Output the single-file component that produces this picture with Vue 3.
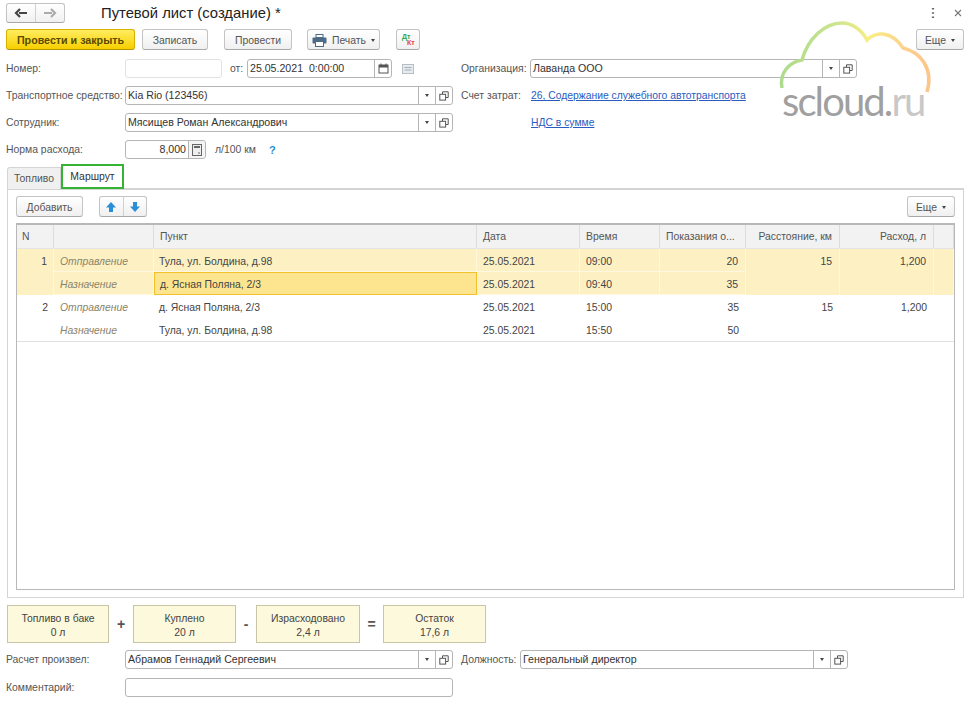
<template>
  <div class="page">
    <!-- window header -->
    <div class="head">
      <div class="nav">
        <button class="nav-btn">
          <svg width="14" height="10" viewBox="0 0 14 10"><path d="M13 5H5M6 1 2 5l4 4" fill="none" stroke="#444" stroke-width="2.2"/></svg>
        </button>
        <button class="nav-btn">
          <svg width="14" height="10" viewBox="0 0 14 10"><path d="M1 5h8M8 1l4 4-4 4" fill="none" stroke="#aaa" stroke-width="2.2"/></svg>
        </button>
      </div>
      <h1 class="title">Путевой лист (создание) *</h1>
      <div class="win-icons">
        <svg width="4" height="12" viewBox="0 0 4 12"><path d="M2 1v1.6M2 5.2v1.6M2 9.4V11" stroke="#666" stroke-width="2.2"/></svg>
        <svg width="10" height="10" viewBox="0 0 10 10"><path d="m2 2 6 6M8 2 2 8" stroke="#777" stroke-width="1.1"/></svg>
      </div>
    </div>

    <!-- command bar -->
    <div class="commands">
      <button class="btn primary">Провести и закрыть</button>
      <button class="btn w-save">Записать</button>
      <button class="btn w-post">Провести</button>
      <button class="btn w-print">
        <svg width="15" height="13" viewBox="0 0 15 13">
          <rect x="4" y="0.5" width="7" height="3" fill="#fff" stroke="#4d6b86"/>
          <rect x="0.5" y="3.5" width="14" height="6" rx="1" fill="#4d6b86"/>
          <rect x="3.5" y="7.5" width="8" height="5" fill="#fff" stroke="#4d6b86"/>
        </svg>
        Печать
        <i class="caret"></i>
      </button>
      <button class="btn dtkt"><span class="dt">Дт</span><span class="kt">Кт</span></button>
      <button class="btn more top-more">Еще <i class="caret"></i></button>
    </div>

    <!-- requisites -->
    <div class="form">
      <label>Номер:</label>
      <div class="line">
        <div class="field blank w-num"></div>
        <span class="from">от:</span>
        <div class="field w-date">
          <span class="val">25.05.2021&nbsp; 0:00:00</span>
          <span class="fb">
            <svg width="11" height="11" viewBox="0 0 11 11"><rect x="1" y="2" width="9" height="8" fill="none" stroke="#555"/><rect x="1" y="2" width="9" height="2.5" fill="#555"/><path d="M3 .5V2M8 .5V2" stroke="#555"/></svg>
          </span>
        </div>
        <svg class="note" width="12" height="10" viewBox="0 0 12 10"><rect x="0.5" y="0.5" width="11" height="9" fill="#e6ebef" stroke="#b4bfc8"/><path d="M2.5 3.5h7M2.5 6h7" stroke="#a3b0ba"/></svg>
      </div>
      <label class="lbl2">Организация:</label>
      <div class="field">
        <span class="val">Лаванда ООО</span>
        <span class="fb"><i class="caret"></i></span>
        <span class="fb"><svg width="10" height="10" viewBox="0 0 10 10"><path d="M3.5 3V.8h5.7v5.7H7" fill="none" stroke="#555"/><rect x="0.8" y="3.3" width="5.8" height="5.8" fill="none" stroke="#555"/></svg></span>
      </div>

      <label>Транспортное средство:</label>
      <div class="field">
        <span class="val">Kia Rio (123456)</span>
        <span class="fb"><i class="caret"></i></span>
        <span class="fb"><svg width="10" height="10" viewBox="0 0 10 10"><path d="M3.5 3V.8h5.7v5.7H7" fill="none" stroke="#555"/><rect x="0.8" y="3.3" width="5.8" height="5.8" fill="none" stroke="#555"/></svg></span>
      </div>
      <label class="lbl2">Счет затрат:</label>
      <a class="link">26, Содержание служебного автотранспорта</a>

      <label>Сотрудник:</label>
      <div class="field">
        <span class="val">Мясищев Роман Александрович</span>
        <span class="fb"><i class="caret"></i></span>
        <span class="fb"><svg width="10" height="10" viewBox="0 0 10 10"><path d="M3.5 3V.8h5.7v5.7H7" fill="none" stroke="#555"/><rect x="0.8" y="3.3" width="5.8" height="5.8" fill="none" stroke="#555"/></svg></span>
      </div>
      <span></span>
      <a class="link">НДС в сумме</a>

      <label>Норма расхода:</label>
      <div class="line">
        <div class="field w-rate">
          <span class="val right">8,000</span>
          <span class="fb calc">
            <svg width="10" height="12" viewBox="0 0 10 12"><rect x="0.5" y="0.5" width="9" height="11" fill="#eee" stroke="#666"/><rect x="2" y="2" width="6" height="2" fill="#666"/><path d="M6 9h2" stroke="#666"/></svg>
          </span>
        </div>
        <span class="unit">л/100 км</span>
        <span class="hint">?</span>
      </div>
    </div>

    <!-- tabs -->
    <div class="tabs">
      <div class="tab">Топливо</div>
      <div class="tab active">Маршрут</div>
    </div>
    <div class="panel">
      <div class="toolbar">
        <button class="btn w-add">Добавить</button>
        <div class="arrows">
          <button class="arrow">
            <svg width="12" height="12" viewBox="0 0 12 12"><path d="M6 1 1 6.500h3V11h4V6.500h3z" fill="#2b8fd6"/></svg>
          </button>
          <button class="arrow">
            <svg width="12" height="12" viewBox="0 0 12 12"><path d="M6 11 1 5.500h3V1h4v4.500h3z" fill="#2b8fd6"/></svg>
          </button>
        </div>
        <button class="btn more">Еще <i class="caret"></i></button>
      </div>

      <div class="table">
        <div class="row header">
          <div v-for="c in columns" :key="c.key" class="cell" :class="{ right: c.right, num: c.key === 'n' }">{{ c.title }}</div>
        </div>
        <div v-for="g in groups" :key="g.n" class="group" :class="{ selected: g.selected }">
          <div class="cell right span num">{{ g.n }}</div>
          <template v-for="(p, i) in g.points" :key="i">
            <div class="cell kind">{{ p.kind }}</div>
            <div class="cell place" :class="{ current: p.current }">{{ p.place }}</div>
            <div class="cell">{{ p.date }}</div>
            <div class="cell">{{ p.time }}</div>
            <div class="cell right">{{ p.odo }}</div>
            <template v-if="i === 0">
              <div class="cell right span">{{ g.dist }}</div>
              <div class="cell right span">{{ g.cons }}</div>
              <div class="cell span"></div>
            </template>
          </template>
        </div>
      </div>
    </div>

    <!-- fuel summary -->
    <div class="summary">
      <template v-for="s in summary" :key="s.title">
        <div class="box" :style="{ width: s.width + 'px' }">{{ s.title }}<br />{{ s.value }}</div>
        <span v-if="s.op" class="op" :style="{ width: s.gap + 'px' }">{{ s.op }}</span>
      </template>
    </div>

    <div class="form bottom">
      <label>Расчет произвел:</label>
      <div class="field">
        <span class="val">Абрамов Геннадий Сергеевич</span>
        <span class="fb"><i class="caret"></i></span>
        <span class="fb"><svg width="10" height="10" viewBox="0 0 10 10"><path d="M3.5 3V.8h5.7v5.7H7" fill="none" stroke="#555"/><rect x="0.8" y="3.3" width="5.8" height="5.8" fill="none" stroke="#555"/></svg></span>
      </div>
      <div class="pos">
        <label class="lbl2">Должность:</label>
        <div class="field">
          <span class="val">Генеральный директор</span>
          <span class="fb"><i class="caret"></i></span>
          <span class="fb"><svg width="10" height="10" viewBox="0 0 10 10"><path d="M3.5 3V.8h5.7v5.7H7" fill="none" stroke="#555"/><rect x="0.8" y="3.3" width="5.8" height="5.8" fill="none" stroke="#555"/></svg></span>
        </div>
      </div>

      <label>Комментарий:</label>
      <div class="field"></div>
    </div>

    <!-- watermark over the form -->
    <div class="logo">
      <svg width="160" height="80" viewBox="775 18 160 80">
        <defs>
          <linearGradient id="cloud" x1="0" y1="0" x2="1" y2="0">
            <stop offset="0" stop-color="#aedb8c" />
            <stop offset="0.35" stop-color="#c8e48e" />
            <stop offset="0.6" stop-color="#f9ee85" />
            <stop offset="0.85" stop-color="#fdcf8e" />
            <stop offset="1" stop-color="#fcc58a" />
          </linearGradient>
        </defs>
        <path d="M782 88C779 72 790 62 802 60 808 38 825 23 842 23 852 23 862 30 867 40 876 31 892 31 903 48 920 52 934 68 927 92" fill="none" stroke="url(#cloud)" stroke-width="3.500" />
      </svg>
      <div class="logo-text"><span class="a">scloud.</span><span class="b">ru</span></div>
    </div>
  </div>
</template>

<script setup>
const columns = [
  { key: 'n', title: 'N' },
  { key: 'kind', title: '' },
  { key: 'place', title: 'Пункт' },
  { key: 'date', title: 'Дата' },
  { key: 'time', title: 'Время' },
  { key: 'odo', title: 'Показания о...' },
  { key: 'dist', title: 'Расстояние, км', right: true },
  { key: 'cons', title: 'Расход, л', right: true },
  { key: 'end', title: '' },
]

const groups = [
  {
    n: 1,
    selected: true,
    dist: 15,
    cons: '1,200',
    points: [
      { kind: 'Отправление', place: 'Тула, ул. Болдина, д.98', date: '25.05.2021', time: '09:00', odo: 20 },
      { kind: 'Назначение', place: 'д. Ясная Поляна, 2/3', date: '25.05.2021', time: '09:40', odo: 35, current: true },
    ],
  },
  {
    n: 2,
    dist: 15,
    cons: '1,200',
    points: [
      { kind: 'Отправление', place: 'д. Ясная Поляна, 2/3', date: '25.05.2021', time: '15:00', odo: 35 },
      { kind: 'Назначение', place: 'Тула, ул. Болдина, д.98', date: '25.05.2021', time: '15:50', odo: 50 },
    ],
  },
]

const summary = [
  { title: 'Топливо в баке', value: '0 л', width: 102, op: '+', gap: 24 },
  { title: 'Куплено', value: '20 л', width: 103, op: '-', gap: 20 },
  { title: 'Израсходовано', value: '2,4 л', width: 104, op: '=', gap: 23 },
  { title: 'Остаток', value: '17,6 л', width: 103 },
]
</script>

<style>
html,
body {
  margin: 0;
  background: #fff;
}
</style>

<style scoped>
.page {
  position: relative;
  width: 974px;
  height: 704px;
  overflow: hidden;
  box-sizing: border-box;
  padding: 2px 10px 0 6px;
  font-family: "Liberation Sans", Arial, sans-serif;
  font-size: 10.400px;
  color: #555;
}
button {
  font: inherit;
  color: inherit;
  padding: 0;
}
label {
  white-space: nowrap;
}
.head {
  display: flex;
  align-items: center;
  height: 21px;
}
.nav {
  display: flex;
  width: 59px;
  height: 20px;
  box-sizing: border-box;
  border: 1px solid #c4c4c4;
  border-bottom-color: #a8a8a8;
  border-radius: 3px;
  background: linear-gradient(#fff, #f0f0f0);
}
.nav-btn {
  flex: 1;
  border: 0;
  background: none;
  display: flex;
  align-items: center;
  justify-content: center;
}
.nav-btn + .nav-btn {
  border-left: 1px solid #d0d0d0;
}
.title {
  margin: 0 0 0 36px;
  font-size: 14.800px;
  font-weight: 400;
  color: #222;
}
.win-icons {
  margin-left: auto;
  display: flex;
  align-items: center;
  gap: 18px;
  margin-right: 1px;
}
.commands {
  display: flex;
  align-items: center;
  height: 21px;
  margin-top: 6px;
}
.btn {
  display: flex;
  align-items: center;
  justify-content: center;
  gap: 5px;
  box-sizing: border-box;
  height: 21px;
  padding-top: 1px;
  border: 1px solid #c4c4c4;
  border-bottom-color: #a8a8a8;
  border-radius: 3px;
  background: linear-gradient(#fff, #f0f0f0);
}
.primary {
  width: 129px;
  font-size: 10.700px;
  font-weight: 700;
  color: #5a4a00;
  background: linear-gradient(#ffed60, #f7cf00);
  border-color: #d6b100;
  border-bottom-color: #b69600;
}
.w-save {
  width: 66px;
  margin-left: 7px;
}
.w-post {
  width: 68px;
  margin-left: 16px;
}
.w-print {
  width: 73px;
  margin-left: 15px;
}
.dtkt {
  width: 24px;
  margin-left: 16px;
  position: relative;
  font-size: 7px;
  font-weight: 700;
}
.dt {
  position: absolute;
  left: 5px;
  top: 3px;
  color: #2ea84a;
}
.kt {
  position: absolute;
  left: 10px;
  top: 9px;
  color: #e0443c;
}
.more {
  width: 48px;
  margin-left: auto;
}
.top-more {
  position: relative;
  z-index: 2;
}
.caret {
  display: inline-block;
  width: 0;
  height: 0;
  border-left: 2.500px solid transparent;
  border-right: 2.500px solid transparent;
  border-top: 3px solid #444;
}
.form {
  display: grid;
  grid-template-columns: 119px 328px 8px 69px 327px;
  grid-auto-rows: 19px;
  row-gap: 8px;
  align-items: center;
  margin-top: 9px;
}
.form > label {
  grid-column: 1;
}
.form > .lbl2 {
  grid-column: 4;
}
.form > span:empty {
  grid-column: 3 / 5;
}
.form > .lbl2 + .field,
.form > .lbl2 + .link {
  grid-column: 5;
}
.form > .link {
  grid-column: 5;
  justify-self: start;
  margin-left: 1px;
}
.line {
  display: flex;
  align-items: center;
  width: 290px;
}
.field {
  display: flex;
  align-items: center;
  box-sizing: border-box;
  height: 19px;
  border: 1px solid #b5b5b5;
  border-radius: 3px;
  background: #fff;
}
.blank {
  border-color: #e2e2e2;
}
.val {
  flex: 1;
  margin-top: -1px;
  padding-left: 2px;
  color: #333;
  font-size: 10.600px;
  white-space: nowrap;
}
.val.right {
  text-align: right;
  padding-right: 2px;
}
.fb {
  display: flex;
  align-items: center;
  justify-content: center;
  width: 16px;
  height: 100%;
  border-left: 1px solid #b5b5b5;
}
.fb.calc {
  background: #f4f4f4;
  border-radius: 0 3px 3px 0;
}
.w-num {
  flex: none;
  width: 97px;
}
.from {
  margin-left: 8px;
  width: 17px;
}
.w-date {
  flex: none;
  width: 145px;
}
.note {
  margin-left: 10px;
  flex: none;
}
.w-rate {
  flex: none;
  width: 81px;
}
.unit {
  margin-left: 9px;
}
.hint {
  margin-left: 13px;
  color: #2b8fd6;
  font-weight: 700;
  font-size: 11px;
}
.link {
  color: #2a5bbf;
  font-size: 10.350px;
  text-decoration: underline;
  white-space: nowrap;
}
.tabs {
  display: flex;
  align-items: flex-end;
  height: 25px;
  margin-top: 5px;
  margin-left: 1px;
}
.tab {
  box-sizing: border-box;
  display: flex;
  align-items: center;
  justify-content: center;
  width: 54px;
  height: 22px;
  border: 1px solid #d4d4d4;
  border-bottom: 0;
  background: #f0f0f0;
  border-radius: 3px 0 0 0;
}
.tab.active {
  width: 63px;
  height: 25px;
  border: 2px solid #35b335;
  border-radius: 0;
  background: #fff;
  color: #333;
  position: relative;
  z-index: 1;
}
.panel {
  box-sizing: border-box;
  height: 410px;
  margin-top: -1px;
  margin-left: 1px;
  padding: 6px 8px 7px 8px;
  border: 1px solid #d4d4d4;
  border-top-width: 2px;
  display: flex;
  flex-direction: column;
}
.toolbar {
  display: flex;
  align-items: center;
  height: 21px;
  flex: none;
}
.w-add {
  width: 67px;
}
.arrows {
  display: flex;
  width: 48px;
  height: 21px;
  margin-left: 16px;
  box-sizing: border-box;
  border: 1px solid #c4c4c4;
  border-bottom-color: #a8a8a8;
  border-radius: 3px;
  background: linear-gradient(#fff, #f0f0f0);
}
.arrow {
  flex: 1;
  border: 0;
  background: none;
  display: flex;
  align-items: center;
  justify-content: center;
}
.arrow + .arrow {
  border-left: 1px solid #d0d0d0;
}
.table {
  flex: 1;
  margin-top: 6px;
  border: 1px solid #b8b8b8;
  border-top-width: 2px;
}
.row,
.group {
  display: grid;
  grid-template-columns: 37px 100px 323px 103px 80px 86px 94px 94px 1fr;
}
.group {
  grid-template-rows: 23px 23px;
}
.header {
  height: 23px;
  border-bottom: 1px solid #e4e4e4;
}
.cell {
  box-sizing: border-box;
  display: flex;
  align-items: center;
  padding: 2px 5px 0 6px;
  height: 23px;
  color: #444;
  white-space: nowrap;
  overflow: hidden;
}
.header .cell {
  background: #f2f2f2;
  border-right: 1px solid #dcdcdc;
  color: #555;
  padding-top: 0;
}
.cell.num,
.cell.place {
  padding-left: 5px;
}
.cell.right {
  justify-content: flex-end;
  padding-right: 7px;
}
.cell.num.right {
  padding-right: 6px;
}
.cell.span {
  grid-row: span 2;
  height: 46px;
  align-items: flex-start;
  padding-top: 7px;
}
.kind {
  font-style: italic;
  color: #8c8468;
}
.group:last-child {
  border-bottom: 1px solid #e0e0e0;
}
.selected {
  background: #fdf1c4;
}
.selected .cell {
  border-right: 1px solid #fff8e0;
}
.selected .cell:not(.span) {
  border-bottom: 1px solid #fff8e0;
}
.selected .cell.current {
  background: #fde48e;
  border: 1px solid #f3c02e;
}
.summary {
  display: flex;
  align-items: center;
  margin-top: 7px;
  margin-left: 1px;
}
.box {
  box-sizing: border-box;
  height: 38px;
  border: 1px solid #c9c6a8;
  background: #fdf9dc;
  text-align: center;
  line-height: 14px;
  padding-top: 6px;
  color: #444;
}
.op {
  text-align: center;
  font-size: 14px;
  font-weight: 700;
}
.bottom {
  margin-top: 7px;
  row-gap: 9px;
}
.pos {
  grid-column: 3 / 6;
  display: flex;
  align-items: center;
  padding-left: 8px;
}
.pos label {
  width: 59px;
}
.pos .field {
  width: 328px;
}
.logo {
  position: absolute;
  left: 775px;
  top: 18px;
  width: 160px;
  height: 104px;
  pointer-events: none;
}
.logo svg {
  display: block;
}
.logo-text {
  position: absolute;
  left: 7px;
  top: 59px;
  font-family: Lato, sans-serif;
  font-weight: 400;
  font-size: 40px;
  line-height: 48px;
  letter-spacing: -1.900px;
  white-space: nowrap;
}
.logo-text .a {
  color: #a0a0a0;
}
.logo-text .b {
  color: #c8c8c8;
}
</style>
